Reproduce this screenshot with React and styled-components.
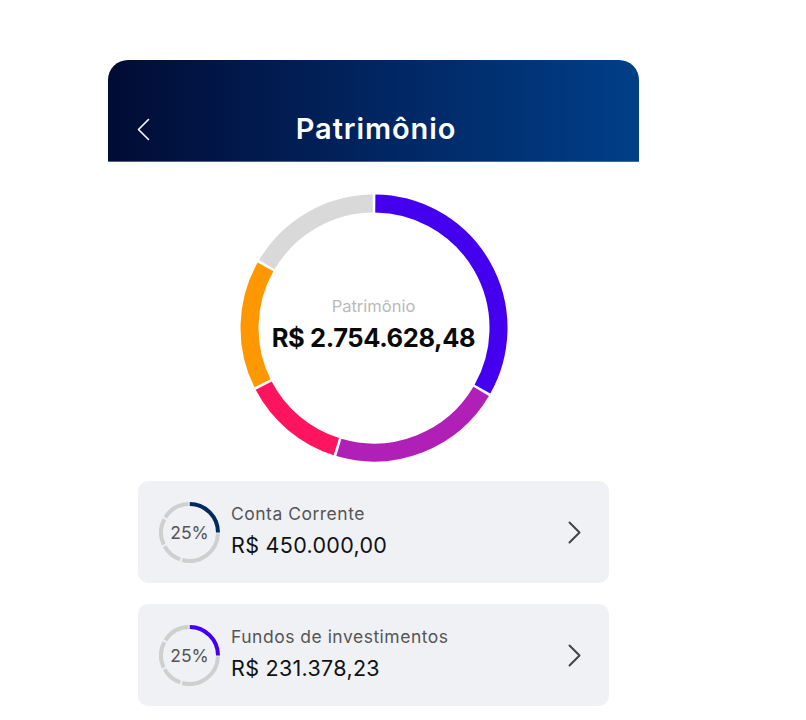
import React from "react";
import styled, { createGlobalStyle } from "styled-components";

const Global = createGlobalStyle`
  html, body { margin: 0; padding: 0; background: #ffffff; }
  body { font-family: Inter, "Noto Sans", sans-serif; -webkit-font-smoothing: antialiased; }
`;

const Screen = styled.div`
  width: 531px;
  margin: 60px 0 0 108px;
  display: flex;
  flex-direction: column;
`;

const Header = styled.header`
  height: 102px;
  border-radius: 20px 20px 0 0;
  background: linear-gradient(90deg, #010c34 0%, #01225c 45%, #003f88 100%);
  border-bottom: 1px solid #3a6aa0;
  display: flex;
  align-items: flex-end;
  padding: 0 24px 10px 29px;
  box-sizing: border-box;
`;

const BackButton = styled.button`
  background: none;
  border: 0;
  padding: 0;
  width: 14px;
  height: 44px;
  display: flex;
  align-items: center;
  cursor: pointer;
`;

const Title = styled.h1`
  flex: 1;
  margin: 0 0 0 -14px;
  text-align: center;
  color: #ffffff;
  font-size: 29px;
  font-weight: 600;
  letter-spacing: 0.9px;
  line-height: 44px;
`;

const Content = styled.main`
  display: flex;
  flex-direction: column;
  align-items: center;
  padding: 32px 30px 0;
`;

const DonutWrap = styled.div`
  position: relative;
  width: 268px;
  height: 268px;
`;

const DonutCenter = styled.div`
  position: absolute;
  inset: 0;
  display: flex;
  flex-direction: column;
  align-items: center;
  justify-content: center;
  padding-bottom: 6px;
  box-sizing: border-box;
`;

const DonutLabel = styled.span`
  color: #b9b9b9;
  font-size: 16.5px;
  font-weight: 400;
  line-height: 22px;
`;

const DonutValue = styled.span`
  color: #0a0a0a;
  font-size: 25.5px;
  font-weight: 700;
  letter-spacing: -0.4px;
  line-height: 34px;
  margin-top: 4px;
`;

const List = styled.ul`
  list-style: none;
  margin: 19px 0 0;
  padding: 0;
  width: 471px;
  display: flex;
  flex-direction: column;
  gap: 21px;
`;

const Card = styled.li`
  height: 102px;
  background: #f0f1f5;
  border-radius: 10px;
  display: flex;
  align-items: center;
  padding: 0 28px 0 21px;
  box-sizing: border-box;
`;

const Ring = styled.div`
  position: relative;
  width: 61px;
  height: 61px;
  flex: none;
`;

const RingText = styled.span`
  position: absolute;
  inset: 0;
  display: flex;
  align-items: center;
  justify-content: center;
  color: #555555;
  font-size: 17.5px;
  font-weight: 400;
`;

const Info = styled.div`
  flex: 1;
  display: flex;
  flex-direction: column;
  margin-left: 11px;
  margin-top: -2px;
`;

const ItemLabel = styled.span`
  color: #555555;
  font-size: 17.5px;
  letter-spacing: 0.5px;
  line-height: 22px;
`;

const ItemValue = styled.span`
  color: #111111;
  font-size: 21.5px;
  font-weight: 400;
  letter-spacing: 0.3px;
  line-height: 28px;
  margin-top: 6px;
`;

const polar = (cx, cy, r, deg) => {
  const a = ((deg - 90) * Math.PI) / 180;
  return [cx + r * Math.cos(a), cy + r * Math.sin(a)];
};

const arc = (cx, cy, r, a0, a1) => {
  const [x0, y0] = polar(cx, cy, r, a0);
  const [x1, y1] = polar(cx, cy, r, a1);
  const large = a1 - a0 > 180 ? 1 : 0;
  return `M ${x0} ${y0} A ${r} ${r} 0 ${large} 1 ${x1} ${y1}`;
};

const segments = [
  { from: 0, to: 120, color: "#4400ee" },
  { from: 120, to: 197, color: "#b020b6" },
  { from: 197, to: 243, color: "#ff145f" },
  { from: 243, to: 300, color: "#ff9800" },
  { from: 300, to: 360, color: "#d9d9d9" },
];

const Donut = () => (
  <svg width="268" height="268" viewBox="0 0 268 268">
    {segments.map((s, i) => (
      <path
        key={i}
        d={arc(134, 134, 124.5, s.from + 0.6, s.to - 0.6)}
        fill="none"
        stroke={s.color}
        strokeWidth="18"
      />
    ))}
  </svg>
);

const MiniRing = ({ color }) => {
  const gray = [
    [90, 197],
    [197, 243],
    [243, 300],
    [300, 360],
  ];
  return (
    <svg width="61" height="61" viewBox="0 0 61 61">
      {gray.map(([a, b], i) => (
        <path key={i} d={arc(30.5, 30.5, 28.5, a + 2, b - 2)} fill="none" stroke="#cfcfcf" strokeWidth="4" />
      ))}
      <path d={arc(30.5, 30.5, 28.5, 0.5, 90)} fill="none" stroke={color} strokeWidth="4" />
    </svg>
  );
};

const Chevron = ({ dir = "right", color, width = 2 }) => (
  <svg width="13" height="23" viewBox="0 0 13 23">
    <path
      d={dir === "right" ? "M1.5 1.5 L11.5 11.5 L1.5 21.5" : "M11.5 1.5 L1.5 11.5 L11.5 21.5"}
      fill="none"
      stroke={color}
      strokeWidth={width}
      strokeLinecap="round"
      strokeLinejoin="round"
    />
  </svg>
);

const items = [
  { label: "Conta Corrente", value: "R$ 450.000,00", color: "#03285e" },
  { label: "Fundos de investimentos", value: "R$ 231.378,23", color: "#4400ee" },
];

export default function App() {
  return (
    <>
      <Global />
      <Screen>
        <Header>
          <BackButton aria-label="Voltar">
            <Chevron dir="left" color="#ffffff" width={1.6} />
          </BackButton>
          <Title>Patrimônio</Title>
        </Header>
        <Content>
          <DonutWrap>
            <Donut />
            <DonutCenter>
              <DonutLabel>Patrimônio</DonutLabel>
              <DonutValue>R$ 2.754.628,48</DonutValue>
            </DonutCenter>
          </DonutWrap>
          <List>
            {items.map((it) => (
              <Card key={it.label}>
                <Ring>
                  <MiniRing color={it.color} />
                  <RingText>25%</RingText>
                </Ring>
                <Info>
                  <ItemLabel>{it.label}</ItemLabel>
                  <ItemValue>{it.value}</ItemValue>
                </Info>
                <Chevron dir="right" color="#444444" width={2} />
              </Card>
            ))}
          </List>
        </Content>
      </Screen>
    </>
  );
}
